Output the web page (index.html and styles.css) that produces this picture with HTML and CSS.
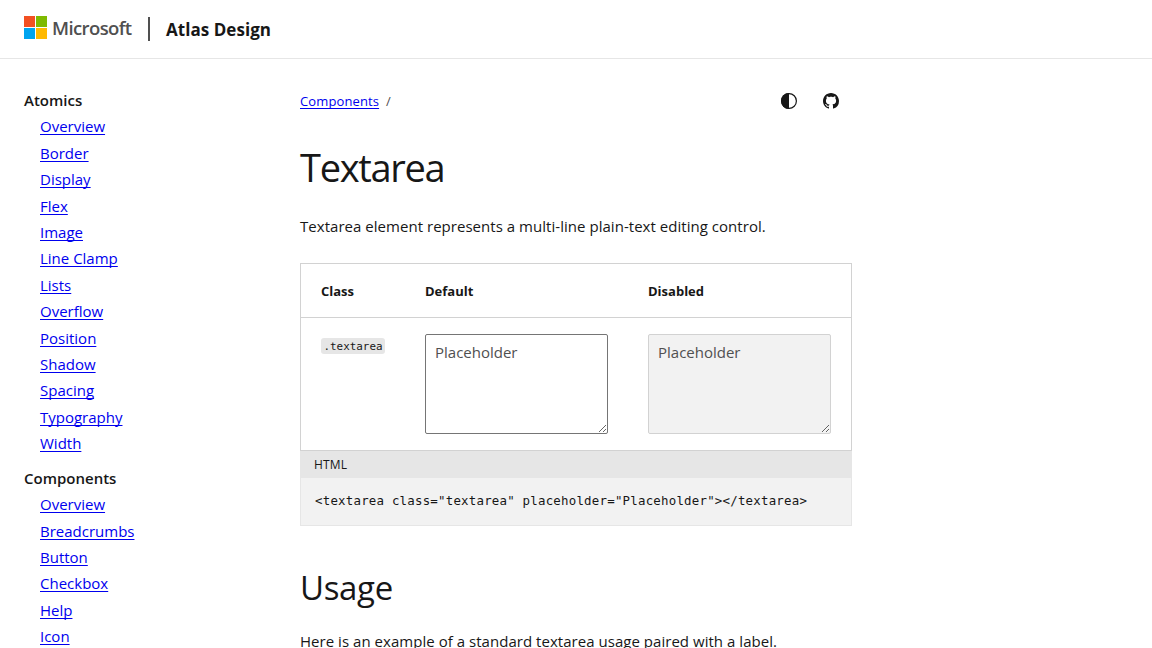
FILE: index.html
```html
<!DOCTYPE html>
<html lang="en">
<head>
<meta charset="utf-8">
<title>Textarea - Atlas Design</title>
<link rel="stylesheet" href="styles.css">
</head>
<body>
<header class="header">
  <a class="logo">
    <svg class="logo-mark" width="23" height="23" viewBox="0 0 23 23"><path fill="#f25022" d="M0 0h11v11H0z"/><path fill="#7fba00" d="M12 0h11v11H12z"/><path fill="#00a4ef" d="M0 12h11v11H0z"/><path fill="#ffb900" d="M12 12h11v11H12z"/></svg>
    <span class="logo-word">Microsoft</span>
  </a>
  <span class="divider"></span>
  <span class="site-name">Atlas Design</span>
</header>
<div class="layout">
  <nav class="sidebar">
    <h2 class="nav-title">Atomics</h2>
    <ul class="nav-list">
      <li><a href="#">Overview</a></li>
      <li><a href="#">Border</a></li>
      <li><a href="#">Display</a></li>
      <li><a href="#">Flex</a></li>
      <li><a href="#">Image</a></li>
      <li><a href="#">Line Clamp</a></li>
      <li><a href="#">Lists</a></li>
      <li><a href="#">Overflow</a></li>
      <li><a href="#">Position</a></li>
      <li><a href="#">Shadow</a></li>
      <li><a href="#">Spacing</a></li>
      <li><a href="#">Typography</a></li>
      <li><a href="#">Width</a></li>
    </ul>
    <h2 class="nav-title">Components</h2>
    <ul class="nav-list">
      <li><a href="#">Overview</a></li>
      <li><a href="#">Breadcrumbs</a></li>
      <li><a href="#">Button</a></li>
      <li><a href="#">Checkbox</a></li>
      <li><a href="#">Help</a></li>
      <li><a href="#">Icon</a></li>
    </ul>
  </nav>
  <main class="content">
    <div class="topline">
      <div class="crumbs"><a href="#">Components</a><span class="slash">/</span></div>
      <div class="actions">
        <svg width="16" height="16" viewBox="0 0 16 16"><circle cx="8" cy="8" r="7.4" fill="none" stroke="#171717" stroke-width="1.2"/><path fill="#171717" d="M8 0a8 8 0 0 0 0 16z"/></svg>
        <svg width="16" height="16" viewBox="0 0 16 16"><path fill="#171717" d="M8 0C3.58 0 0 3.58 0 8c0 3.54 2.29 6.53 5.47 7.59.4.07.55-.17.55-.38 0-.19-.01-.82-.01-1.49-2.01.37-2.53-.49-2.69-.94-.09-.23-.48-.94-.82-1.13-.28-.15-.68-.52-.01-.53.63-.01 1.08.58 1.23.82.72 1.21 1.87.87 2.33.66.07-.52.28-.87.51-1.07-1.78-.2-3.64-.89-3.64-3.95 0-.87.31-1.59.82-2.15-.08-.2-.36-1.02.08-2.12 0 0 .67-.21 2.2.82.64-.18 1.32-.27 2-.27s1.36.09 2 .27c1.53-1.04 2.2-.82 2.2-.82.44 1.1.16 1.92.08 2.12.51.56.82 1.27.82 2.15 0 3.07-1.87 3.75-3.65 3.95.29.25.54.73.54 1.48 0 1.07-.01 1.93-.01 2.2 0 .21.15.46.55.38A8.01 8.01 0 0 0 16 8c0-4.42-3.58-8-8-8z"/></svg>
      </div>
    </div>
    <h1 class="title">Textarea</h1>
    <p class="text lead">Textarea element represents a multi-line plain-text editing control.</p>
    <div class="table">
      <div class="row head"><span>Class</span><span>Default</span><span>Disabled</span></div>
      <div class="row body">
        <div class="class-cell"><code class="chip">.textarea</code></div>
        <textarea class="textarea" placeholder="Placeholder"></textarea>
        <textarea class="textarea" placeholder="Placeholder" disabled></textarea>
      </div>
    </div>
    <div class="code-head">HTML</div>
    <pre class="code"><code>&lt;textarea class="textarea" placeholder="Placeholder"&gt;&lt;/textarea&gt;</code></pre>
    <h2 class="subtitle">Usage</h2>
    <p class="text usage">Here is an example of a standard textarea usage paired with a label.</p>
  </main>
</div>
</body>
</html>
```
FILE: styles.css
```css
* { box-sizing: border-box; }
body {
  margin: 0;
  height: 648px;
  overflow: hidden;
  background: #fff;
  color: #171717;
  font-family: "Open Sans", "Noto Sans", sans-serif;
  font-size: 15px;
}
h1, h2, p, ul, pre { margin: 0; padding: 0; }
a { color: #0000ee; text-decoration: underline; text-underline-offset: 2px; text-decoration-thickness: 1px; text-decoration-skip-ink: none; }
.header { display: flex; height: 59px; padding: 0 24px; border-bottom: 1px solid #e6e6e6; }
.logo { display: flex; padding-top: 16px; gap: 5px; text-decoration: none; }
.logo-mark { flex: none; }
.logo-word { width: 80px; color: #505050; font-size: 18.5px; font-weight: 600; line-height: 23px; letter-spacing: -0.6px; white-space: nowrap; }
.divider { width: 2px; height: 24px; margin: 17px 16px 0; background: #505050; }
.site-name { font-size: 17px; font-weight: 700; line-height: 60px; letter-spacing: 0.05px; white-space: nowrap; }
.layout { display: grid; grid-template-columns: 276px 552px; padding: 28px 24px 0; }
.nav-title { font-size: 15px; font-weight: 600; line-height: 26.4px; }
.nav-list { padding-left: 16px; margin-bottom: 8px; list-style: none; }
.nav-list li { line-height: 26.4px; }
.topline { display: flex; justify-content: space-between; height: 28px; padding-right: 13px; }
.crumbs { font-size: 13px; line-height: 28px; letter-spacing: 0.12px; }
.slash { margin-left: 7px; color: #505050; }
.actions { display: flex; gap: 26px; padding-top: 6px; }
.title { margin-top: 26px; font-size: 38px; font-weight: 400; line-height: 52px; letter-spacing: -1.3px; }
.text { line-height: 24px; letter-spacing: 0.035px; white-space: nowrap; }
.lead { margin-top: 21px; }
.table { margin-top: 25px; border: 1px solid #d2d2d2; }
.row { display: grid; grid-template-columns: 64px 183px 183px; column-gap: 40px; padding: 0 20px; }
.head { height: 54px; border-bottom: 1px solid #d2d2d2; font-size: 13px; font-weight: 700; line-height: 54px; }
.body { padding-top: 16px; padding-bottom: 16px; }
.class-cell { padding-top: 4px; }
.chip { display: block; width: 64px; height: 16px; border-radius: 3px; background: #e6e6e6; font-family: "DejaVu Sans Mono", monospace; font-size: 10.9px; line-height: 17px; text-align: center; }
.textarea { display: block; width: 183px; height: 100px; margin: 0; padding: 5px 9px; border: 1px solid #757575; border-radius: 2px; background: #fff; font: 15px/24px "Open Sans", "Noto Sans", sans-serif; resize: both; }
.textarea::placeholder { color: #505050; opacity: 1; }
.textarea:disabled { border-color: #d2d2d2; background: #f2f2f2; }
.code-head { height: 27px; padding-left: 14px; background: #e6e6e6; font-size: 12px; line-height: 27px; letter-spacing: 0.15px; }
.code { height: 48px; padding-left: 14px; border: 1px solid #e6e6e6; border-top: 0; background: #f2f2f2; font-size: 12.42px; line-height: 45px; letter-spacing: 0.22px; }
.code code { font-family: "DejaVu Sans Mono", monospace; font-size: 12.42px; }
.subtitle { margin-top: 40px; font-size: 33px; font-weight: 400; line-height: 44px; letter-spacing: -0.35px; }
.usage { margin-top: 19px; }
```
